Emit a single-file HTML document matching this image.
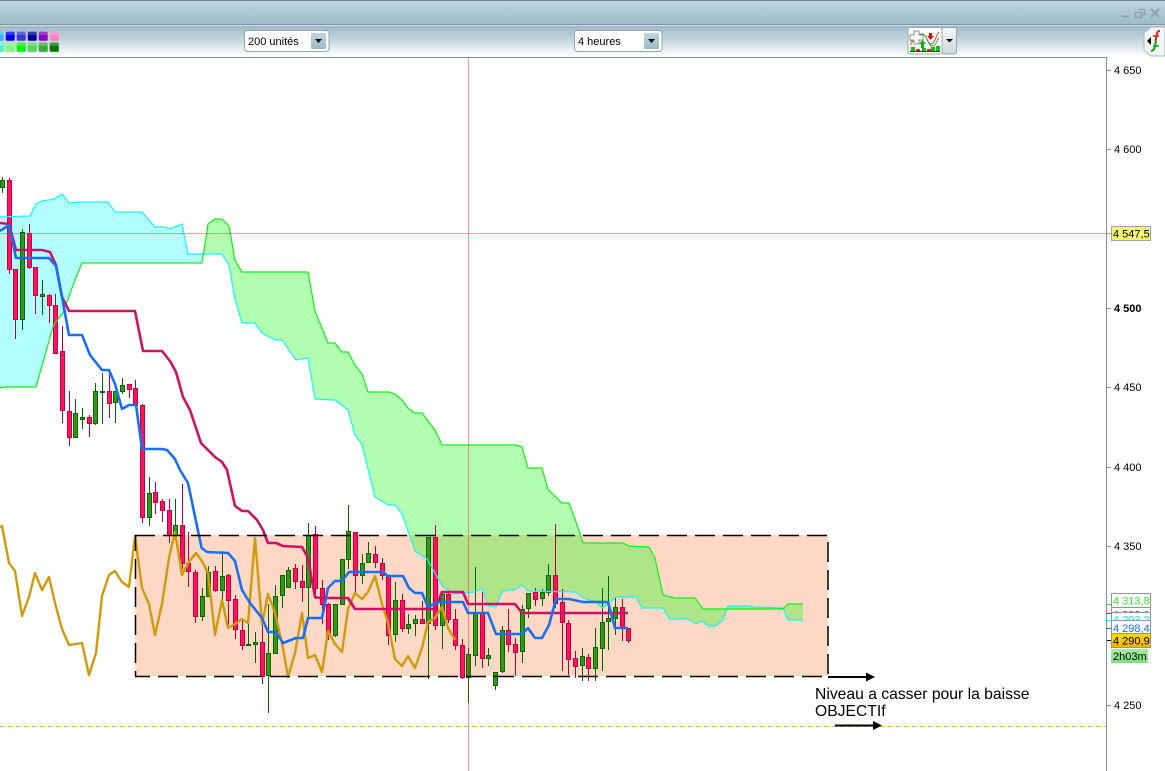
<!DOCTYPE html>
<html><head><meta charset="utf-8"><style>
html,body{margin:0;padding:0;background:#fff;width:1165px;height:771px;overflow:hidden}
svg{display:block;font-family:"Liberation Sans",sans-serif}
</style></head><body>
<svg width="1165" height="771" viewBox="0 0 1165 771" xmlns="http://www.w3.org/2000/svg">
<defs>
<linearGradient id="g1" x1="0" y1="0" x2="0" y2="1"><stop offset="0" stop-color="#bcd7e3"/><stop offset="1" stop-color="#9db9c5"/></linearGradient>
<linearGradient id="g2" x1="0" y1="0" x2="0" y2="1"><stop offset="0" stop-color="#9dbac6"/><stop offset=".45" stop-color="#c3d5dc"/><stop offset="1" stop-color="#ffffff"/></linearGradient>
<linearGradient id="g3" x1="0" y1="0" x2="0" y2="1"><stop offset="0" stop-color="#c0d6e0"/><stop offset="1" stop-color="#9cb8c6"/></linearGradient>
<linearGradient id="g4" x1="0" y1="0" x2="0" y2="1"><stop offset="0" stop-color="#ffd617"/><stop offset="1" stop-color="#f5b400"/></linearGradient>
<linearGradient id="g5" x1="0" y1="0" x2="0" y2="1"><stop offset="0" stop-color="#f4f7f8"/><stop offset="1" stop-color="#cfd8dc"/></linearGradient>
<linearGradient id="g6" x1="0" y1="0" x2="0" y2="1"><stop offset="0" stop-color="#a6eda6"/><stop offset="1" stop-color="#7fe07f"/></linearGradient>
<clipPath id="cp"><rect x="0" y="58" width="1106" height="713"/></clipPath>
</defs>

<!-- header -->
<rect x="0" y="0" width="1165" height="25" fill="url(#g1)"/>
<rect x="0" y="0" width="1165" height="1" fill="#6d8794"/>
<rect x="0" y="24" width="1165" height="1" fill="#7a94a1"/>
<rect x="0" y="25" width="1165" height="1" fill="#cfe0e6"/>
<rect x="0" y="26" width="1165" height="30" fill="url(#g2)"/>
<path d="M1121 16.500h8" stroke="#8aa3ae" stroke-width="2"/>
<path d="M1138.500 9.500h6v5h-2M1135.500 12.500h6v5h-6z" fill="none" stroke="#8aa3ae" stroke-width="1.600"/>
<path d="M1151 9l8 8M1159 9l-8 8" stroke="#8aa3ae" stroke-width="2"/>

<!-- swatches -->
<g stroke="#b6cad3" stroke-width=".6">
<rect x="-6" y="31.500" width="10" height="9.500" rx="1.500" fill="#33b5ff"/>
<rect x="5.500" y="31.500" width="9.500" height="9.500" rx="1.500" fill="#0000f5"/>
<rect x="16.500" y="31.500" width="9.500" height="9.500" rx="1.500" fill="#3a3ad0"/>
<rect x="27.500" y="31.500" width="9.500" height="9.500" rx="1.500" fill="#00009c"/>
<rect x="38.500" y="31.500" width="9.500" height="9.500" rx="1.500" fill="#8c00c0"/>
<rect x="49.500" y="31.500" width="9.500" height="9.500" rx="1.500" fill="#ff80c0"/>
<rect x="-6" y="42.500" width="10" height="9.500" rx="1.500" fill="#40ffc0"/>
<rect x="5.500" y="42.500" width="9.500" height="9.500" rx="1.500" fill="#80ff80"/>
<rect x="16.500" y="42.500" width="9.500" height="9.500" rx="1.500" fill="#00f800"/>
<rect x="27.500" y="42.500" width="9.500" height="9.500" rx="1.500" fill="#55d855"/>
<rect x="38.500" y="42.500" width="9.500" height="9.500" rx="1.500" fill="#30b030"/>
<rect x="49.500" y="42.500" width="9.500" height="9.500" rx="1.500" fill="#007800"/>
</g>
<path d="M0 32h4v3h-4zM6 32h8.500v3h-8.500zM17 32h8.500v3h-8.500zM28 32h8.500v3h-8.500zM39 32h8.500v3h-8.500zM50 32h8.500v3h-8.500zM0 43h4v3h-4zM6 43h8.500v3h-8.500zM17 43h8.500v3h-8.500zM28 43h8.500v3h-8.500zM39 43h8.500v3h-8.500zM50 43h8.500v3h-8.500z" fill="#fff" fill-opacity=".22"/>

<!-- dropdowns -->
<rect x="244.500" y="30.500" width="84.500" height="21" rx="3" fill="#fff" stroke="#91a6b0"/>
<rect x="311" y="33" width="15" height="16" rx="1" fill="url(#g3)"/>
<path d="M315 39h7l-3.500 4z" fill="#000"/>
<text x="248" y="45" font-size="11" fill="#000">200 unités</text>
<rect x="574.500" y="30.500" width="87.500" height="21" rx="3" fill="#fff" stroke="#91a6b0"/>
<rect x="644" y="33" width="15" height="16" rx="1" fill="url(#g3)"/>
<path d="M648 39h7l-3.500 4z" fill="#000"/>
<text x="578" y="45" font-size="11" fill="#000">4 heures</text>

<!-- icon button -->
<rect x="942" y="27.500" width="14.500" height="26.500" rx="2" fill="url(#g5)" stroke="#98a9b1"/>
<path d="M946 39h7l-3.500 3.500z" fill="#000"/>
<rect x="908" y="27.500" width="34" height="26.500" rx="2" fill="#fff" stroke="#98a9b1"/>
<path d="M910 45c4-5 7-11 12-11s5 10 9 10 5-9 8-12" fill="none" stroke="#d33" stroke-width=".9"/>
<path d="M910 42c4-3 7-8 12-8s6 12 10 12 5-6 7-8" fill="none" stroke="#2a2" stroke-width=".9"/>
<path d="M914 31h5v4h4v5h-4v4h-5v-4h-4v-5h4z" fill="#fff" stroke="#8a8a8a"/>
<path d="M929 33h3v3h2l-3.500 4-3.500-4h2z" fill="#e01010"/>
<path d="M919 44l3.500-4 3.500 4h-2v4h-3v-4z" fill="#10b010"/>
<path d="M911 47h4v4h-4zM922 48h4v3h-4zM931 47h4v4h-4zM936 46h4v5h-4z" fill="#10c010"/>
<path d="M916 49h4v2h-4zM927 49h4v2h-4z" fill="#e02020"/>
<path d="M910 51.500h30" stroke="#2233aa"/>

<!-- right tab -->
<path d="M1165 27h-14l-7 6v17l7 6h14z" fill="#f3f6f7" stroke="#a9bac2"/>
<path d="M1151 37v8l-4-4z" fill="#000"/>
<path d="M1160 31c-3 0-3 2-3.500 5l-1 5" fill="none" stroke="#e02020" stroke-width="2"/>
<path d="M1153 36h6" stroke="#e02020" stroke-width="1.500"/>
<path d="M1156 41l-1 5c-.5 3-2 5-4 5" fill="none" stroke="#18a018" stroke-width="2"/>
<path d="M1153 46h6" stroke="#18a018" stroke-width="1.500"/>

<!-- chart frame bg -->
<rect x="0" y="57" width="1165" height="714" fill="#fff"/>

<g clip-path="url(#cp)">
<!-- peach box -->
<rect x="135" y="535" width="693" height="141" fill="#fdd9c5"/>

<!-- cloud fills -->
<path fill="rgba(0,255,255,.3)" d="M0 217L30 216 36 204 42 201 54 199 62 194 69 203 80 202 108 202 115 212 142 212 155 227 165 227 170 229 182 224 188 254 203 254 202 263 170 263 82 263 75 280 63 313 55 323 53 327 36 387 5 387 0 388Z"/>
<path fill="rgba(0,255,0,.3)" d="M203.500 254L208 224 215 219 222 219 229 226 235 260 242 272 308 272 315 311 328 343 335 343 342 352 348 352 355 365 362 374 368 392 389 392 395 394 402 400 408 408 415 413 422 413 435 430 442 445 516 445 522 447 528 468 542 468 548 489 562 503 569 503 575 519 583 543 623 543 629 546 649 547 655 558 663 595 675 598 695 598 703 609 783 609 788 604 803 604 803 620 788 620 783 608 755 607 748 606 728 606 723 620 716 626 708 626 702 621 696 624 688 619 669 619 663 608 642 608 636 597 615 597 609 603 602 608 596 602 583 598 576 592 528 591 522 585 515 590 508 590 502 592 496 607 488 606 482 588 475 592 455 594 443 587 427 559 415 551 402 514 395 505 388 505 375 497 362 445 355 435 348 410 335 400 315 399 308 358 296 360 282 340 275 340 262 333 255 323 242 323 235 300 229 265 222 254Z"/>

<!-- orange dashed -->
<path d="M0 726.500H1106" stroke="#ffb327" stroke-dasharray="5 3"/>

<!-- wicks -->
<path fill="none" stroke="#b80038" d="M9.500 178V274M15.500 269V339M29.500 224V269M35.500 267V314M49.500 294V323M55.500 294V354M62.500 326V423M69.500 391V446M89.500 415V437M109.500 374V418M129.500 384V398M135.500 380V405M142.500 404V523M155.500 482V514M162.500 499V522M169.500 499V543M182.500 484V569M188.500 532V587M195.500 570V623M215.500 566V592M228.500 574V625M235.500 595V639M242.500 618V650M262.500 625V684M295.500 564V589M302.500 565V602M315.500 526V599M322.500 580V624M328.500 603V640M355.500 532V593M375.500 546V568M382.500 558V580M388.500 575V645M402.500 594V632M422.500 601V623M435.500 525V630M448.500 590V623M455.500 609V650M462.500 639V679M482.500 592V668M508.500 609V652M515.500 638V676M535.500 588V606M555.500 524V608M562.500 589V671M568.500 620V675M575.500 651V678M588.500 654V681M622.500 599V641M628.500 628V643"/>
<path fill="none" stroke="#006400" d="M2.500 177V193M22.500 229V330M42.500 280V315M75.500 399V437M82.500 408V429M95.500 383V425M102.500 373V424M115.500 391V423M122.500 378V394M149.500 477V526M175.500 499V539M202.500 588V621M208.500 566V597M222.500 551V607M248.500 624V645M255.500 632V663M268.500 604V713M275.500 585V654M282.500 575V608M288.500 567V587M308.500 523V618M335.500 604V637M342.500 559V605M348.500 505V569M362.500 554V584M368.500 542V562M395.500 582V642M408.500 614V634M415.500 615V636M428.500 537V679M442.500 593V649M468.500 648V703M475.500 567V666M488.500 648V666M495.500 672V690M502.500 626V673M522.500 605V663M528.500 593V618M542.500 589V606M548.500 564V596M582.500 648V681M595.500 628V681M602.500 588V671M608.500 576V650M615.500 598V635"/>
<!-- bodies -->
<path fill="#ff1263" stroke="#c8003c" d="M7.500 180.500h4V269.500h-4zM13.500 269.500h4V319.500h-4zM27.500 233.500h4V267.500h-4zM33.500 267.500h4V295.500h-4zM47.500 295.500h4V305.500h-4zM53.500 305.500h4V353.500h-4zM60.500 351.500h4V410.500h-4zM67.500 411.500h4V437.500h-4zM87.500 417.500h4V423.500h-4zM107.500 391.500h4V403.500h-4zM127.500 384.500h4V389.500h-4zM133.500 388.500h4V405.500h-4zM140.500 405.500h4V517.500h-4zM153.500 492.500h4V502.500h-4zM160.500 501.500h4V510.500h-4zM167.500 510.500h4V535.500h-4zM180.500 525.500h4V563.500h-4zM186.500 563.500h4V571.500h-4zM193.500 572.500h4V616.500h-4zM213.500 571.500h4V590.500h-4zM226.500 575.500h4V600.500h-4zM233.500 599.500h4V629.500h-4zM240.500 630.500h4V645.500h-4zM260.500 642.500h4V676.500h-4zM293.500 568.500h4V581.500h-4zM300.500 581.500h4V587.500h-4zM313.500 534.500h4V588.500h-4zM320.500 588.500h4V604.500h-4zM326.500 604.500h4V635.500h-4zM353.500 532.500h4V575.500h-4zM373.500 554.500h4V562.500h-4zM380.500 563.500h4V575.500h-4zM386.500 575.500h4V635.500h-4zM400.500 600.500h4V628.500h-4zM420.500 619.500h4V623.500h-4zM433.500 537.500h4V625.500h-4zM446.500 594.500h4V619.500h-4zM453.500 619.500h4V645.500h-4zM460.500 645.500h4V677.500h-4zM480.500 613.500h4V658.500h-4zM506.500 630.500h4V644.500h-4zM513.500 644.500h4V652.500h-4zM533.500 592.500h4V599.500h-4zM553.500 575.500h4V603.500h-4zM560.500 602.500h4V622.500h-4zM566.500 623.500h4V659.500h-4zM573.500 658.500h4V666.500h-4zM586.500 657.500h4V668.500h-4zM620.500 607.500h4V628.500h-4zM626.500 628.500h4V640.500h-4z"/>
<path fill="#2f9a12" stroke="#0b6400" d="M0.500 180.500h4V187.500h-4zM20.500 232.500h4V319.500h-4zM40.500 294.500h4V296.500h-4zM73.500 413.500h4V437.500h-4zM80.500 417.500h4V419.500h-4zM93.500 391.500h4V423.500h-4zM100.500 391.500h4V392.500h-4zM113.500 391.500h4V402.500h-4zM120.500 385.500h4V391.500h-4zM147.500 493.500h4V517.500h-4zM173.500 525.500h4V535.500h-4zM200.500 596.500h4V616.500h-4zM206.500 572.500h4V596.500h-4zM220.500 576.500h4V590.500h-4zM246.500 644.500h4V645.500h-4zM253.500 642.500h4V644.500h-4zM266.500 653.500h4V675.500h-4zM273.500 596.500h4V653.500h-4zM280.500 575.500h4V595.500h-4zM286.500 570.500h4V587.500h-4zM306.500 535.500h4V587.500h-4zM333.500 604.500h4V635.500h-4zM340.500 559.500h4V604.500h-4zM346.500 531.500h4V559.500h-4zM360.500 563.500h4V575.500h-4zM366.500 553.500h4V562.500h-4zM393.500 600.500h4V634.500h-4zM406.500 624.500h4V628.500h-4zM413.500 619.500h4V623.500h-4zM426.500 537.500h4V623.500h-4zM440.500 594.500h4V625.500h-4zM466.500 654.500h4V677.500h-4zM473.500 613.500h4V655.500h-4zM486.500 655.500h4V658.500h-4zM493.500 672.500h4V685.500h-4zM500.500 630.500h4V671.500h-4zM520.500 609.500h4V651.500h-4zM526.500 593.500h4V608.500h-4zM540.500 592.500h4V598.500h-4zM546.500 575.500h4V592.500h-4zM580.500 656.500h4V665.500h-4zM593.500 647.500h4V668.500h-4zM600.500 622.500h4V648.500h-4zM606.500 618.500h4V621.500h-4zM613.500 607.500h4V618.500h-4z"/>

<!-- cloud lines -->
<path fill="none" stroke="#17f5ff" stroke-width="1.200" d="M0 217L30 216 36 204 42 201 54 199 62 194 69 203 80 202 108 202 115 212 142 212 155 227 165 227 170 229 182 224 188 254 222 254 229 265 235 300 242 323 255 323 262 333 275 340 282 340 296 360 308 358 315 399 335 400 348 410 355 435 362 445 375 497 388 505 395 505 402 514 415 551 427 559 443 587 455 594 475 592 482 588 488 606 496 607 502 592 508 590 515 590 522 585 528 591 576 592 583 598 596 602 602 608 609 603 615 597 636 597 642 608 663 608 669 619 688 619 696 624 702 621 708 626 716 626 723 620 728 606 748 606 755 607 783 608 788 620 803 620"/>
<path fill="none" stroke="#14f014" stroke-width="1.200" d="M0 388L5 387 36 387 53 327 55 323 63 313 75 280 82 263 202 263 208 224 215 219 222 219 229 226 235 260 242 272 308 272 315 311 328 343 335 343 342 352 348 352 355 365 362 374 368 392 389 392 395 394 402 400 408 408 415 413 422 413 435 430 442 445 516 445 522 447 528 468 542 468 548 489 562 503 569 503 575 519 583 543 623 543 629 546 649 547 655 558 663 595 675 598 695 598 703 609 783 609 788 604 803 604"/>

<!-- gold -->
<path fill="none" stroke="#d19a0c" stroke-width="2.400" stroke-linejoin="round" d="M0 527L2 526 9 563 15 571 22 616 29 597 35 573 42 590 49 577 55 603 62 629 69 645 82 643 89 675 96 653 102 596 109 575 115 571 122 582 129 587 135 536 142 588 149 604 155 635 162 604 169 558 175 532 182 575 188 563 196 553 202 561 208 573 215 635 222 600 228 628 235 624 242 619 248 623 255 538 262 624 268 594 275 613 282 643 288 677 295 653 302 613 308 658 315 655 322 672 328 631 335 644 342 652 348 609 355 593 362 599 368 592 375 576 382 604 388 623 395 659 402 666 408 656 415 668 422 648 428 622 435 618 442 607 448 628 455 640"/>
<!-- magenta -->
<path fill="none" stroke="#cc1267" stroke-width="2.600" stroke-linejoin="round" d="M0 223L9 224 16 250 42 250 50 252 56 265 62 297 69 311 135 311 143 351 162 351 170 361 176 372 183 397 190 410 201 443 215 457 222 462 227 470 235 506 242 511 248 511 257 520 263 530 268 543 276 543 283 546 302 547 308 558 315 597 320 598 348 598 355 609 435 609 442 592 463 592 468 604 515 604 522 613 628 613"/>
<!-- blue -->
<path fill="none" stroke="#1a6ff0" stroke-width="2.600" stroke-linejoin="round" d="M0 231L9 225 16 258 49 258 56 266 62 297 69 335 82 335 90 355 102 370 109 370 115 384 122 409 129 405 136 405 142 449 162 449 167 450 175 459 180 470 188 483 201.600 548 207 552 228 553 235 561 242 590 250 603 262 618 268 632 276 632 283 643 296 638 303 638 308 618 322 618 328 588 335 581 342 581 349 572 383 572 388 576 403 576 409 588 415 593 422 593 428 607 438 602 463 602 468 613 488 613 496 634 522 634 528 628 535 638 542 638 549 625 556 599 569 599 583 602 608 602 615 628 628 628"/>

<!-- box dashes -->
<g stroke="#000" stroke-width="1.500" fill="none">
<path d="M135 535.500H828" stroke-dasharray="20 8"/>
<path d="M135 676.500H828" stroke-dasharray="20 8" stroke-dashoffset="5"/>
<path d="M135.500 535V676" stroke-dasharray="16 8 20 8 20 8 20 8 20 8"/>
<path d="M828 535V676" stroke-dasharray="20 8" stroke-dashoffset="21"/>
</g>
<!-- arrows -->
<path d="M828 677H867" stroke="#000" stroke-width="2"/>
<path d="M866 672.500L875 677 866 681.500z" fill="#000"/>
<path d="M835 725.500H874" stroke="#000" stroke-width="2"/>
<path d="M873 721L882 725.500 873 730z" fill="#000"/>
<text x="815" y="699" font-size="15.700" fill="#000">Niveau a casser pour la baisse</text>
<text x="815" y="716" font-size="15.700" fill="#000">OBJECTIf</text>

<!-- crosshair -->
<path d="M0 233.500H1106" stroke="#ff0000" stroke-opacity=".38"/>
<path d="M468.500 58V771" stroke="#ff0000" stroke-opacity=".42"/>
</g>

<!-- frame -->
<path d="M0 57.500H1106.500V771" fill="none" stroke="#7e929b"/>

<!-- axis -->
<g stroke="#7e929b"><path d="M1107 70.500h4M1107 149.500h4M1107 308.500h4M1107 387.500h4M1107 467.500h4M1107 546.500h4M1107 705.500h4"/></g>
<g font-size="11" fill="#000">
<text x="1114" y="74">4 650</text>
<text x="1114" y="153">4 600</text>
<text x="1114" y="312" font-weight="bold">4 500</text>
<text x="1114" y="391">4 450</text>
<text x="1114" y="471">4 400</text>
<text x="1114" y="550">4 350</text>
<text x="1114" y="709">4 250</text>
</g>
<path d="M1107 233.500h4" stroke="#f08080"/>
<rect x="1111.500" y="226.500" width="39" height="14" fill="#f7f76a" stroke="#9aa5a5"/>
<text x="1113" y="237.500" font-size="11" fill="#000">4 547,5</text>

<path d="M1107 604.500h4" stroke="#14f014"/>
<path d="M1107 613.500h4" stroke="#cc1267"/>
<path d="M1107 620.500h4" stroke="#17f5ff"/>
<path d="M1107 628.500h4" stroke="#1a6ff0"/>
<path d="M1107 640.500h4" stroke="#000"/>

<rect x="1111.500" y="593.500" width="39" height="14" fill="#fff" stroke="#8a979d"/>
<text x="1113" y="604.500" font-size="11" fill="#33ee33">4 313,8</text>
<rect x="1111.500" y="607.500" width="39" height="14" fill="#fff" stroke="#8a979d"/>
<text x="1113" y="618.500" font-size="11" fill="#cc1267">4 298,1</text>
<rect x="1111.500" y="612.500" width="39" height="14" fill="#fff" stroke="#8a979d"/>
<text x="1113" y="623.500" font-size="11" fill="#17e5f0">4 293,2</text>
<rect x="1111.500" y="620.500" width="39" height="13" fill="#fff" stroke="#8a979d"/>
<text x="1113" y="632" font-size="11" fill="#1a6ff0">4 298,4</text>
<rect x="1111.500" y="633.500" width="39" height="14" fill="url(#g4)" stroke="#8a979d"/>
<text x="1113" y="644.500" font-size="11" fill="#000">4 290,9</text>
<rect x="1111" y="649" width="37" height="14" fill="url(#g6)"/>
<text x="1113" y="660" font-size="11" fill="#000">2h03m</text>
</svg>
</body></html>
